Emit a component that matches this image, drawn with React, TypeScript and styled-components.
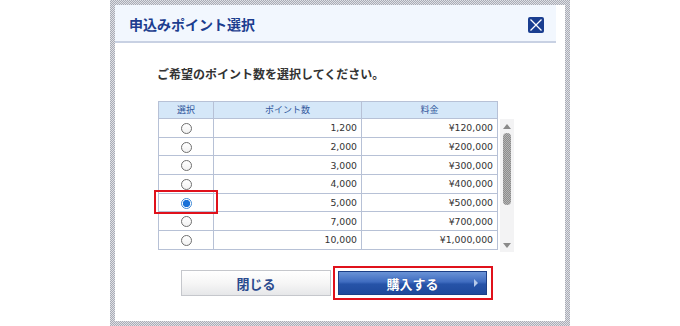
import styled, { createGlobalStyle } from 'styled-components';

const GlobalStyle = createGlobalStyle`
    html, body {
        margin: 0;
        padding: 0;
        background: #fff;
    }
    body {
        font-family: "Noto Sans CJK JP", "DejaVu Sans", sans-serif;
    }
`;

const rows = [
    { points: '1,200', price: '¥120,000' },
    { points: '2,000', price: '¥200,000' },
    { points: '3,000', price: '¥300,000' },
    { points: '4,000', price: '¥400,000' },
    { points: '5,000', price: '¥500,000' },
    { points: '7,000', price: '¥700,000' },
    { points: '10,000', price: '¥1,000,000' },
];

const colWidths = [55, 148, 136];
const selectedIndex = 4;

const Page = styled.div`
    width: 680px;
    height: 326px;
    display: flex;
    justify-content: flex-start;
    padding-left: 110px;
    box-sizing: border-box;
    overflow: hidden;
`;

// 灰色の網点フレーム
const Frame = styled.div`
    width: 460px;
    height: 326px;
    box-sizing: border-box;
    padding: 5px;
    background: repeating-conic-gradient(#a9acb6 0 25%, #dfe0e5 0 50%) 0 0 / 2px 2px;
`;

const Dialog = styled.div`
    width: 100%;
    height: 100%;
    background: #fff;
    display: flex;
    flex-direction: column;
`;

const Header = styled.div`
    height: 36px;
    margin-right: 9px;
    background: #f2f7fe;
    border-bottom: 2px solid #c8d1e3;
    display: flex;
    align-items: center;
    justify-content: space-between;
    padding: 0 12px 0 14px;
`;

const Title = styled.div`
    font-size: 14px;
    font-weight: bold;
    color: #1c3d8f;
    line-height: 1;
    margin-top: 1px;
`;

const CloseBox = styled.div`
    width: 16px;
    height: 16px;
    display: flex;
    margin-top: 3px;
`;

const Content = styled.div`
    padding: 22px 0 0 42px;
    display: flex;
    flex-direction: column;
`;

const Lead = styled.div`
    font-size: 12px;
    font-weight: bold;
    color: #333;
    line-height: 18px;
`;

const TableGrid = styled.div`
    margin-top: 18px;
    margin-left: 1px;
    display: grid;
    grid-template-columns: 339px 14px;
    column-gap: 3px;
`;

const Table = styled.table`
    width: 339px;
    border-collapse: collapse;
    table-layout: fixed;
    font-family: "DejaVu Sans", sans-serif;
`;

const Col = styled.col<{ $w: number }>`
    width: ${({ $w }) => $w}px;
`;

const HeadCell = styled.th`
    height: 16px;
    padding: 0;
    background: #d5e7f8;
    border: 1px solid #b7c1d6;
    font-family: "Noto Sans CJK JP", sans-serif;
    font-size: 9px;
    font-weight: normal;
    color: #2f569b;
    line-height: 14px;
`;

// 横方向に余白を持たせ、選択枠がはみ出しても切れないようにする
const Viewport = styled.div`
    height: 133px;
    overflow: hidden;
    padding: 0 6px;
    margin: 0 -6px;
`;

const Cell = styled.td`
    height: 17.7px;
    padding: 0 4px 0 0;
    border: 1px solid #b7c1d6;
    border-top: none;
    font-size: 9.3px;
    color: #333;
    text-align: right;
    white-space: nowrap;
    position: relative;
`;

const RadioCell = styled(Cell)`
    text-align: center;
    padding: 0;
`;

const Radio = styled.span<{ $checked: boolean }>`
    display: inline-block;
    vertical-align: middle;
    width: 11px;
    height: 11px;
    box-sizing: border-box;
    border-radius: 50%;
    border: 1px solid ${({ $checked }) => ($checked ? '#3f8ad8' : '#707070')};
    background: ${({ $checked }) =>
        $checked
            ? 'radial-gradient(circle, #1a72d8 0 3.4px, #fff 3.9px)'
            : 'linear-gradient(#fff, #f2f2f2)'};
`;

const Highlight = styled.span`
    position: absolute;
    left: -5px;
    right: -5px;
    top: -4px;
    bottom: -3px;
    border: 2px solid #e0111b;
    pointer-events: none;
`;

const Scrollbar = styled.div`
    background: #f3f3f4;
    height: 133px;
    display: flex;
    flex-direction: column;
    align-items: center;
    padding: 5px 0 4px;
    box-sizing: border-box;
`;

const Arrow = styled.div<{ $down?: boolean }>`
    width: 0;
    height: 0;
    border-left: 4px solid transparent;
    border-right: 4px solid transparent;
    ${({ $down }) =>
        $down ? 'border-top: 5px solid #8a8a8a;' : 'border-bottom: 5px solid #8a8a8a;'}
`;

const Thumb = styled.div`
    width: 8px;
    height: 72px;
    margin-top: 4px;
    border-radius: 4px;
    background: repeating-conic-gradient(#8c8c8c 0 25%, #b4b4b4 0 50%) 0 0 / 2px 2px;
`;

const TrackFill = styled.div`
    flex: 1;
`;

const ButtonRow = styled.div`
    margin-top: 14px;
    margin-left: 24px;
    display: flex;
    align-items: center;
    gap: 2px;
`;

const CloseButton = styled.div`
    width: 150px;
    height: 26px;
    box-sizing: border-box;
    border: 1px solid #c5c7cc;
    background: linear-gradient(#ffffff 0%, #f6f6f6 50%, #e6e7e9 100%);
    display: flex;
    align-items: center;
    justify-content: center;
    font-size: 13px;
    font-weight: bold;
    color: #2a4a8e;
`;

const BuyFrame = styled.div`
    width: 160px;
    height: 34px;
    box-sizing: border-box;
    border: 2px solid #e0111b;
    padding: 3px 4px 3px 3px;
    display: flex;
`;

const BuyButton = styled.div`
    flex: 1;
    box-sizing: border-box;
    border: 1px solid #1c3f86;
    background: linear-gradient(#6a93d6 0%, #3f6cc0 45%, #2653a8 55%, #1f4a9c 100%);
    display: flex;
    align-items: center;
    justify-content: center;
    position: relative;
    font-size: 13px;
    font-weight: bold;
    color: #fff;
    text-shadow: 0 0 1px #1c3f86;
`;

const BuyArrow = styled.span`
    position: absolute;
    right: 8px;
    top: 50%;
    margin-top: -4px;
    width: 0;
    height: 0;
    border-top: 4px solid transparent;
    border-bottom: 4px solid transparent;
    border-left: 4px solid #b6c9ea;
`;

function CloseIcon() {
    return (
        <svg width="16" height="16" viewBox="0 0 16 16">
            <rect x="0" y="0" width="16" height="16" rx="2" fill="#1a3e90" />
            <path d="M2.5 2.5 L13.5 13.5 M13.5 2.5 L2.5 13.5" stroke="#fff" strokeWidth="1.3" />
        </svg>
    );
}

function Cols() {
    return (
        <colgroup>
            {colWidths.map((w, i) => (
                <Col key={i} $w={w} />
            ))}
        </colgroup>
    );
}

export default function App() {
    return (
        <>
            <GlobalStyle />
            <Page>
                <Frame>
                    <Dialog>
                        <Header>
                            <Title>申込みポイント選択</Title>
                            <CloseBox>
                                <CloseIcon />
                            </CloseBox>
                        </Header>
                        <Content>
                            <Lead>ご希望のポイント数を選択してください。</Lead>
                            <TableGrid>
                                <Table>
                                    <Cols />
                                    <thead>
                                        <tr>
                                            <HeadCell>選択</HeadCell>
                                            <HeadCell>ポイント数</HeadCell>
                                            <HeadCell>料金</HeadCell>
                                        </tr>
                                    </thead>
                                </Table>
                                <div />
                                <Viewport>
                                    <Table>
                                        <Cols />
                                        <tbody>
                                            {rows.map((r, i) => (
                                                <tr key={r.points}>
                                                    <RadioCell>
                                                        <Radio $checked={i === selectedIndex} />
                                                        {i === selectedIndex && <Highlight />}
                                                    </RadioCell>
                                                    <Cell>{r.points}</Cell>
                                                    <Cell>{r.price}</Cell>
                                                </tr>
                                            ))}
                                        </tbody>
                                    </Table>
                                </Viewport>
                                <Scrollbar>
                                    <Arrow />
                                    <Thumb />
                                    <TrackFill />
                                    <Arrow $down />
                                </Scrollbar>
                            </TableGrid>
                            <ButtonRow>
                                <CloseButton>閉じる</CloseButton>
                                <BuyFrame>
                                    <BuyButton>
                                        購入する
                                        <BuyArrow />
                                    </BuyButton>
                                </BuyFrame>
                            </ButtonRow>
                        </Content>
                    </Dialog>
                </Frame>
            </Page>
        </>
    );
}
